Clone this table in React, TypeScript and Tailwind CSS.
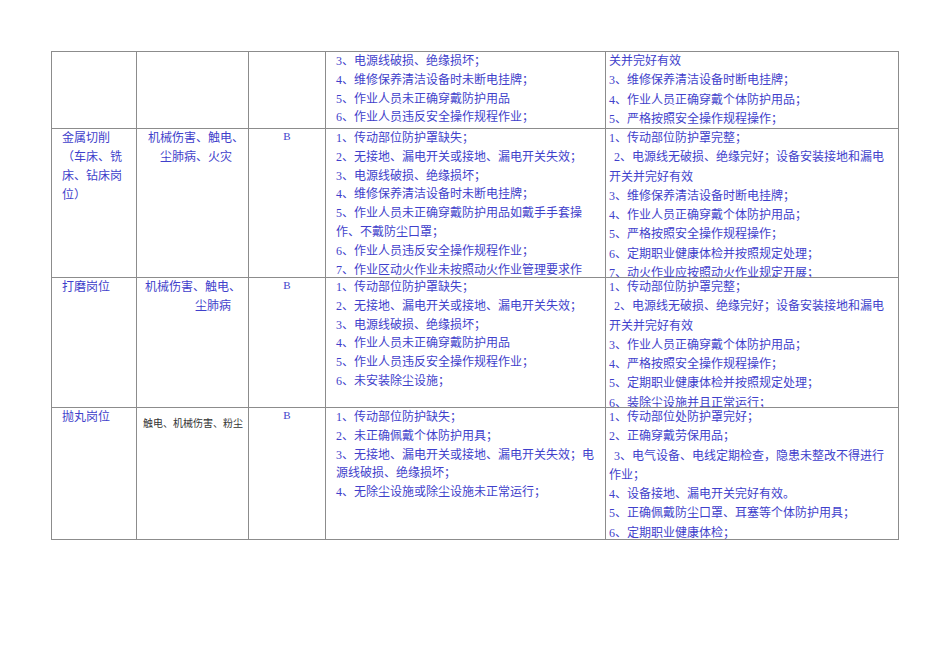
type Row = {
  h: string
  job: string[]
  hazard: string[]
  hazardSmall?: boolean
  hazardPad: string[]
  grade: string
  risks: string[]
  measures: string[]
}

const rows: Row[] = [
  {
    h: 'h-[77px]',
    job: [],
    hazard: [],
    hazardPad: [],
    grade: '',
    risks: [
      '3、电源线破损、绝缘损坏；',
      '4、维修保养清洁设备时未断电挂牌；',
      '5、作业人员未正确穿戴防护用品',
      '6、作业人员违反安全操作规程作业；',
    ],
    measures: [
      '关并完好有效',
      '3、维修保养清洁设备时断电挂牌；',
      '4、作业人员正确穿戴个体防护用品；',
      '5、严格按照安全操作规程操作；',
    ],
  },
  {
    h: 'h-[149px]',
    job: ['金属切削', '（车床、铣', '床、钻床岗', '位）'],
    hazard: ['机械伤害、触电、', '尘肺病、火灾'],
    hazardPad: ['pl-[11px]', 'pl-[23px]'],
    grade: 'B',
    risks: [
      '1、传动部位防护罩缺失；',
      '2、无接地、漏电开关或接地、漏电开关失效；',
      '3、电源线破损、绝缘损坏；',
      '4、维修保养清洁设备时未断电挂牌；',
      '5、作业人员未正确穿戴防护用品如戴手手套操',
      '作、不戴防尘口罩；',
      '6、作业人员违反安全操作规程作业；',
      '7、作业区动火作业未按照动火作业管理要求作',
    ],
    measures: [
      '1、传动部位防护罩完整；',
      ' 2、电源线无破损、绝缘完好；设备安装接地和漏电',
      '开关并完好有效',
      '3、维修保养清洁设备时断电挂牌；',
      '4、作业人员正确穿戴个体防护用品；',
      '5、严格按照安全操作规程操作；',
      '6、定期职业健康体检并按照规定处理；',
      '7、动火作业应按照动火作业规定开展；',
    ],
  },
  {
    h: 'h-[130px]',
    job: ['打磨岗位'],
    hazard: ['机械伤害、触电、', '尘肺病'],
    hazardPad: ['pl-[8px]', 'pl-[58px]'],
    grade: 'B',
    risks: [
      '1、传动部位防护罩缺失；',
      '2、无接地、漏电开关或接地、漏电开关失效；',
      '3、电源线破损、绝缘损坏；',
      '4、作业人员未正确穿戴防护用品',
      '5、作业人员违反安全操作规程作业；',
      '6、未安装除尘设施；',
    ],
    measures: [
      '1、传动部位防护罩完整；',
      ' 2、电源线无破损、绝缘完好；设备安装接地和漏电',
      '开关并完好有效',
      '3、作业人员正确穿戴个体防护用品；',
      '4、严格按照安全操作规程操作；',
      '5、定期职业健康体检并按照规定处理；',
      '6、装除尘设施并且正常运行；',
    ],
  },
  {
    h: 'h-[132px]',
    job: ['抛丸岗位'],
    hazard: ['触电、机械伤害、粉尘'],
    hazardSmall: true,
    hazardPad: ['pl-[6px]'],
    grade: 'B',
    risks: [
      '1、传动部位防护缺失；',
      '2、未正确佩戴个体防护用具；',
      '3、无接地、漏电开关或接地、漏电开关失效；电',
      '源线破损、绝缘损坏；',
      '4、无除尘设施或除尘设施未正常运行；',
    ],
    measures: [
      '1、传动部位处防护罩完好；',
      '2、正确穿戴劳保用品；',
      ' 3、电气设备、电线定期检查，隐患未整改不得进行',
      '作业；',
      '4、设备接地、漏电开关完好有效。',
      '5、正确佩戴防尘口罩、耳塞等个体防护用具；',
      '6、定期职业健康体检；',
    ],
  },
]

function Lines({ items }: { items: string[] }) {
  return (
    <>
      {items.map((t, i) =>
        t.startsWith(' ') ? (
          <div key={i} className="whitespace-nowrap pl-[5px]">
            {t.slice(1)}
          </div>
        ) : (
          <div key={i} className="whitespace-nowrap">
            {t}
          </div>
        )
      )}
    </>
  )
}

export default function App() {
  return (
    <div className="min-h-[671px] w-[950px] bg-white pl-[51px] pt-[51px] font-['Liberation_Serif','Noto_Sans_CJK_SC',serif] text-[12px] text-[#3f3fcb]">
      <div className="grid w-[848px] grid-cols-[85px_112px_77px_280px_293px] border-l border-t border-[#8c8c8c]">
        {rows.map((r, i) => (
          <div key={i} className="contents">
            <div className={`${r.h} overflow-hidden border-b border-r border-[#8c8c8c] pl-[10px] leading-[19px]`}>
              <Lines items={r.job} />
            </div>
            <div className={`${r.h} overflow-hidden border-b border-r border-[#8c8c8c] leading-[19px]`}>
              {r.hazard.map((t, j) => (
                <div
                  key={j}
                  className={`whitespace-nowrap ${r.hazardPad[j]} ${
                    r.hazardSmall ? 'pt-[6px] text-[10px] text-[#333]' : ''
                  }`}
                >
                  {t}
                </div>
              ))}
            </div>
            <div className={`${r.h} overflow-hidden border-b border-r border-[#8c8c8c] text-center text-[11px] leading-[14px]`}>
              {r.grade}
            </div>
            <div className={`${r.h} overflow-hidden border-b border-r border-[#8c8c8c] pl-[10px] leading-[18.8px]`}>
              <Lines items={r.risks} />
            </div>
            <div className={`${r.h} overflow-hidden border-b border-r border-[#8c8c8c] pl-[3px] leading-[19.3px]`}>
              <Lines items={r.measures} />
            </div>
          </div>
        ))}
      </div>
    </div>
  )
}
